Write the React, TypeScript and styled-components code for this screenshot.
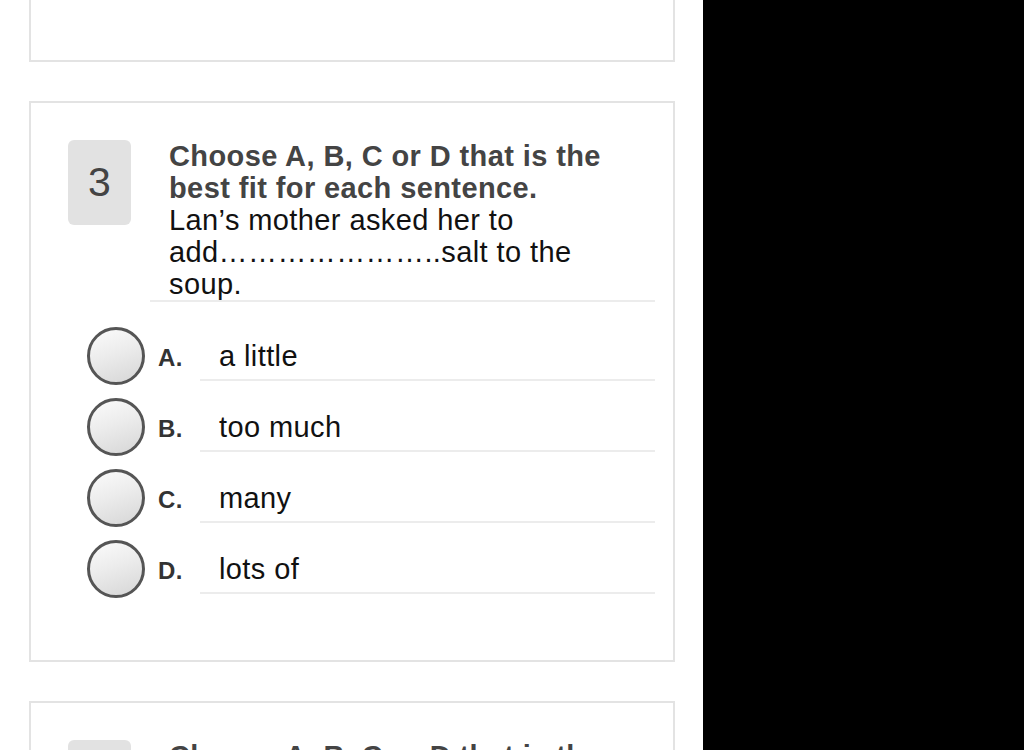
import React from "react";
import styled, { createGlobalStyle } from "styled-components";

const Global = createGlobalStyle`
  html, body { margin: 0; padding: 0; overflow: hidden; background: #000; }
  body { font-family: "Liberation Sans", Arial, sans-serif; }
`;

const Page = styled.div`
  display: flex;
  width: 1024px;
  height: 750px;
  overflow: hidden;
`;

const Sheet = styled.div`
  width: 703px;
  flex: none;
  background: #fff;
  padding-left: 29px;
  box-sizing: border-box;
  display: flex;
  flex-direction: column;
  gap: 39px;
`;

const Side = styled.div`
  flex: 1;
  background: #000;
`;

const Card = styled.div<{ $clipped?: boolean }>`
  width: 646px;
  box-sizing: border-box;
  background: #fff;
  border: 2px solid #e3e3e3;
  border-top: ${(p) => (p.$clipped ? "none" : "2px solid #e3e3e3")};
  height: ${(p) => (p.$clipped ? "62px" : "auto")};
  padding: ${(p) => (p.$clipped ? "0" : "37px 18px 62px 37px")};
  flex: none;
`;

const QuestionRow = styled.div`
  display: flex;
  align-items: flex-start;
  gap: 19px;
`;

const Badge = styled.div`
  width: 63px;
  height: 85px;
  flex: none;
  background: #e2e2e2;
  border-radius: 6px;
  display: flex;
  align-items: center;
  justify-content: center;
  font-size: 41px;
  color: #444;
`;

const Question = styled.div`
  flex: 1;
  padding: 0 20px 0 19px;
  border-bottom: 2px solid #ececec;
  font-size: 29px;
  line-height: 32px;
  letter-spacing: 0.4px;
`;

const Heading = styled.div`
  font-weight: bold;
  color: #444;
`;

const Sentence = styled.div`
  color: #111;
`;

const Options = styled.div`
  display: flex;
  flex-direction: column;
  gap: 13px;
  padding: 25px 0 0 19px;
`;

const OptionRow = styled.div`
  display: flex;
  align-items: flex-start;
  height: 58px;
`;

const Radio = styled.div`
  width: 58px;
  height: 58px;
  flex: none;
  box-sizing: border-box;
  border-radius: 50%;
  border: 3px solid #555;
  background: linear-gradient(160deg, #fbfbfb 0%, #ececec 45%, #d6d6d6 100%);
`;

const Answer = styled.div`
  flex: 1;
  height: 54px;
  box-sizing: border-box;
  padding-top: 13px;
  display: flex;
  align-items: baseline;
  position: relative;
  &::after {
    content: "";
    position: absolute;
    left: 55px;
    right: 0;
    bottom: 0;
    height: 2px;
    background: #ececec;
  }
`;

const Letter = styled.span`
  width: 55px;
  flex: none;
  box-sizing: border-box;
  padding-left: 13px;
  font-size: 24px;
  font-weight: bold;
  letter-spacing: 0.5px;
  color: #333;
`;

const AnswerText = styled.span`
  padding-left: 19px;
  font-size: 29px;
  line-height: 32px;
  letter-spacing: 0.4px;
  color: #111;
`;

const options = [
  { letter: "A.", text: "a little" },
  { letter: "B.", text: "too much" },
  { letter: "C.", text: "many" },
  { letter: "D.", text: "lots of" },
];

const blank = "\u2026".repeat(7) + "..";

export default function App() {
  return (
    <>
      <Global />
      <Page>
        <Sheet>
          <Card $clipped />
          <Card>
            <QuestionRow>
              <Badge>3</Badge>
              <Question>
                <Heading>Choose A, B, C or D that is the best fit for each sentence.</Heading>
                <Sentence>
                  {`Lan\u2019s mother asked her to add${blank}salt to the soup.`}
                </Sentence>
              </Question>
            </QuestionRow>
            <Options>
              {options.map((o) => (
                <OptionRow key={o.letter}>
                  <Radio />
                  <Answer>
                    <Letter>{o.letter}</Letter>
                    <AnswerText>{o.text}</AnswerText>
                  </Answer>
                </OptionRow>
              ))}
            </Options>
          </Card>
          <Card>
            <QuestionRow>
              <Badge>4</Badge>
              <Question>
                <Heading>Choose A, B, C or D that is the best fit for each sentence.</Heading>
              </Question>
            </QuestionRow>
          </Card>
        </Sheet>
        <Side />
      </Page>
    </>
  );
}
